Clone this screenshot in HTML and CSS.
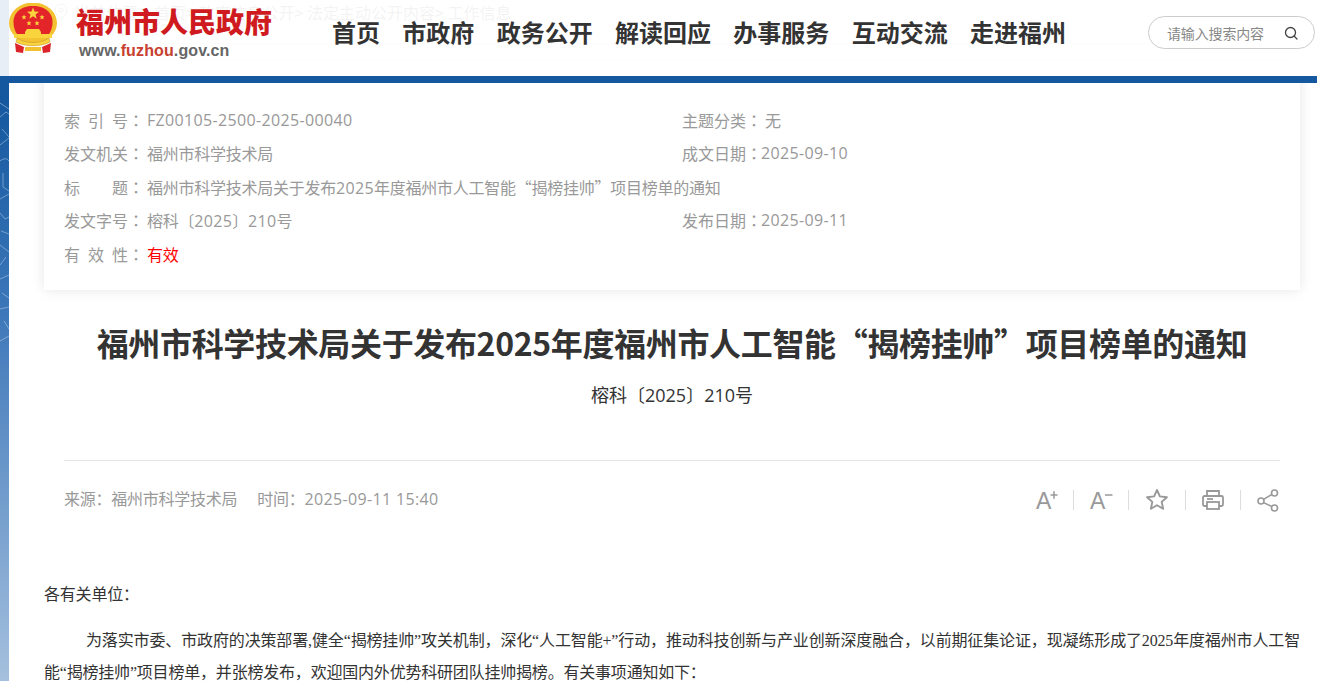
FILE: index.html
```html
<!DOCTYPE html>
<html lang="zh-CN">
<head>
<meta charset="utf-8">
<title>福州市科学技术局关于发布2025年度福州市人工智能“揭榜挂帅”项目榜单的通知</title>
<link rel="stylesheet" href="styles.css">
</head>
<body>
<div class="page">
  <svg class="texture" width="9" height="260" viewBox="0 0 9 260" aria-hidden="true">
    <g fill="none" stroke="#cfe2f5" stroke-width="1" stroke-opacity=".45">
      <path d="M0 8l9 6M0 22l6-5 3 2M2 34l7 8M0 50l9-7M0 66c4-3 7-3 9 0M3 78v14l6 4M0 104l9-5M0 118l5 6 4-2M1 136l8 3M0 150l9 7M6 162l-6 8M0 184l9-4M2 198l7 5M0 214l9-2M4 226l5 8M0 246l9-5"/>
    </g>
  </svg>
  <header class="site-header">
    <a class="logo">
      <svg class="emblem" width="48" height="51" viewBox="0 0 48 51" aria-hidden="true">
        <ellipse cx="24" cy="20" rx="24" ry="20.500" fill="#f2c230"/>
        <path d="M5 24 C2 10 12 3 24 3 C36 3 46 10 43 24 C42 28 41 30 39 32 H9 C7 30 6 28 5 24 Z" fill="#e3252a"/>
        <g fill="#f9d43c">
          <polygon points="24,4.500 25.500,8.600 30,8.700 26.500,11.400 27.700,15.700 24,13.300 20.300,15.700 21.500,11.400 18,8.700 22.500,8.600"/>
          <polygon points="15,11.500 15.700,13.300 17.600,13.400 16.100,14.600 16.600,16.500 15,15.400 13.400,16.500 13.900,14.600 12.400,13.400 14.300,13.300"/>
          <polygon points="20,17.500 20.700,19.300 22.600,19.400 21.100,20.600 21.600,22.500 20,21.400 18.400,22.500 18.900,20.600 17.400,19.400 19.300,19.300"/>
          <polygon points="28,17.500 28.700,19.300 30.600,19.400 29.100,20.600 29.600,22.500 28,21.400 26.400,22.500 26.900,20.600 25.400,19.400 27.300,19.300"/>
          <polygon points="33,11.500 33.700,13.300 35.600,13.400 34.100,14.600 34.600,16.500 33,15.400 31.400,16.500 31.900,14.600 30.400,13.400 32.300,13.300"/>
          <path d="M18 26h12l2 3v2H16v-2z"/>
          <rect x="5" y="31" width="38" height="4"/>
        </g>
        <path d="M8 35 C16 41 32 41 40 35 L41 39 C32 44 16 44 7 39 Z" fill="#f9d43c" stroke="#c9952a" stroke-width=".6"/>
        <path d="M6 40 L15 44 L14 50 L7 49 Z M42 40 L33 44 L34 50 L41 49 Z" fill="#dc242a"/>
        <path d="M16 44H32V48H16Z" fill="#f2c230"/>
      </svg>
      <span class="logo-words">
        <span class="logo-name">福州市人民政府</span>
        <span class="logo-url">www.<em>fuzhou</em>.gov.cn</span>
      </span>
    </a>
    <nav class="nav">
      <a>首页</a><a>市政府</a><a>政务公开</a><a>解读回应</a><a>办事服务</a><a>互动交流</a><a>走进福州</a>
    </nav>
    <div class="search">
      <span>请输入搜索内容</span>
      <svg width="14" height="14" viewBox="0 0 14 14" aria-hidden="true"><circle cx="6.500" cy="6.500" r="5" fill="none" stroke="#444" stroke-width="1.300"/><path d="M10 10l3 3" stroke="#444" stroke-width="1.300" stroke-linecap="round"/></svg>
    </div>
  </header>

  <main class="main">
    <div class="crumbs">
      <svg width="16" height="20" viewBox="0 0 16 20" aria-hidden="true"><path d="M8 2a6 6 0 0 1 6 6c0 4-6 10-6 10S2 12 2 8a6 6 0 0 1 6-6z" fill="none" stroke="#888"/><circle cx="8" cy="8" r="2" fill="none" stroke="#888"/></svg>
      <span>当前位置：首页&gt; 政府信息公开&gt; 法定主动公开内容&gt; 工作信息</span>
    </div>

    <section class="meta">
      <div class="meta-row"><span class="lbl">索引号</span><span class="colon">：</span><span class="num">FZ00105-2500-2025-00040</span></div>
      <div class="meta-row"><span class="lbl">主题分类</span><span class="colon">：</span><span>无</span></div>
      <div class="meta-row"><span class="lbl">发文机关</span><span class="colon">：</span><span>福州市科学技术局</span></div>
      <div class="meta-row"><span class="lbl">成文日期</span><span class="colon tight">：</span><span class="num">2025-09-10</span></div>
      <div class="meta-row wide"><span class="lbl">标题</span><span class="colon">：</span><span>福州市科学技术局关于发布<span class="num">2025</span>年度福州市人工智能“揭榜挂帅”项目榜单的通知</span></div>
      <div class="meta-row"><span class="lbl">发文字号</span><span class="colon">：</span><span>榕科〔<span class="num">2025</span>〕<span class="num">210</span>号</span></div>
      <div class="meta-row"><span class="lbl">发布日期</span><span class="colon tight">：</span><span class="num">2025-09-11</span></div>
      <div class="meta-row wide"><span class="lbl">有效性</span><span class="colon">：</span><span class="valid">有效</span></div>
    </section>

    <h1 class="title">福州市科学技术局关于发布2025年度福州市人工智能“揭榜挂帅”项目榜单的通知</h1>
    <p class="docno">榕科〔<span class="num">2025</span>〕<span class="num">210</span>号</p>

    <div class="info">
      <div class="source"><span>来源<span class="p">：</span>福州市科学技术局</span><span>时间<span class="p">：</span><span class="num">2025-09-11 15:40</span></span></div>
      <div class="tools">
        <svg width="24" height="24" viewBox="0 0 24 24" aria-hidden="true"><text x="2" y="21" class="tool-a">A</text><path d="M16.500 7h7M20 3.250v7.500" stroke="#999" stroke-width="1.500"/></svg>
        <i class="sep"></i>
        <svg width="24" height="24" viewBox="0 0 24 24" aria-hidden="true"><text x="1" y="21" class="tool-a">A</text><path d="M16 7h7.500" stroke="#999" stroke-width="1.500"/></svg>
        <i class="sep"></i>
        <svg width="26" height="24" viewBox="-1 0 26 24" aria-hidden="true"><path d="M12 2l2.900 6.400 7 .8-5.200 4.700 1.400 6.900L12 17.300l-6.100 3.500 1.400-6.900L2.100 9.200l7-.8z" fill="none" stroke="#999" stroke-width="1.900" stroke-linejoin="round"/></svg>
        <i class="sep"></i>
        <svg width="24" height="24" viewBox="0 0 24 24" aria-hidden="true"><g fill="none" stroke="#999" stroke-width="1.800"><path d="M6 8V3h12v5"/><path d="M6 18H3.500A1.500 1.500 0 0 1 2 16.500v-7A1.500 1.500 0 0 1 3.500 8h17A1.500 1.500 0 0 1 22 9.500v7a1.500 1.500 0 0 1-1.500 1.500H18"/><rect x="6" y="14" width="12" height="7"/><path d="M6 11h6"/></g></svg>
        <i class="sep"></i>
        <svg width="24" height="24" viewBox="0 0 24 24" aria-hidden="true"><g fill="none" stroke="#999" stroke-width="1.600"><circle cx="5" cy="13" r="3"/><circle cx="18.500" cy="5" r="3"/><circle cx="18.500" cy="20" r="3"/><path d="M7.600 11.400l8.300-4.900M7.600 14.600l8.300 4"/></g></svg>
      </div>
    </div>

    <article class="content">
      <p class="salute">各有关单位<span class="p">：</span></p>
      <p class="para">为落实市委、市政府的决策部署,健全“揭榜挂帅”攻关机制<span class="p">，</span>深化“人工智能+”行动<span class="p">，</span>推动科技创新与产业创新深度融合<span class="p">，</span>以前期征集论证<span class="p">，</span>现凝练形成了2025年度福州市人工智能“揭榜挂帅”项目榜单<span class="p">，</span>并张榜发布<span class="p">，</span>欢迎国内外优势科研团队挂帅揭榜。有关事项通知如下<span class="p">：</span></p>
    </article>
  </main>
</div>
</body>
</html>
```
FILE: styles.css
```css
* { box-sizing: border-box; }
html, body { margin: 0; height: 100%; overflow: hidden; }
body { font-family: "Noto Sans CJK SC", "Liberation Sans", sans-serif; font-size: 16px; color: #333; }
.page {
  position: relative;
  height: 681px;
  padding-left: 9px;
  overflow: hidden;
  background: linear-gradient(#15589f 0, #15589f 100px, #3a75b8 300px, #a5c0de 681px);
}
.texture { position: absolute; left: 0; top: 95px; }
.site-header {
  position: absolute;
  top: 0; left: 0; right: 0;
  z-index: 2;
  height: 83px;
  display: flex;
  align-items: flex-start;
  background: rgba(255, 255, 255, .9);
  border-bottom: 7px solid #15589f;
}
.logo { display: flex; margin-left: 9px; padding-top: 3px; width: 323px; flex: none; }
.emblem { flex: none; }
.logo-words { display: flex; flex-direction: column; margin-left: 19px; }
.logo-name { font-size: 28px; font-weight: 900; line-height: 38px; color: #cf1b1f; white-space: nowrap; margin-top: -1px; }
.logo-url { font-family: "Liberation Sans", sans-serif; font-size: 16px; font-weight: 700; line-height: 20px; color: #666; margin: 1px 0 0 3px; letter-spacing: .12px; white-space: nowrap; }
.logo-url em { font-style: normal; color: #c8402f; }
.nav { display: flex; gap: 22.330px; padding-top: 14px; flex: none; }
.nav a { font-size: 24px; font-weight: 700; line-height: 36px; color: #333; white-space: nowrap; }
.search {
  margin: 16px 2px 0 auto;
  width: 167px;
  height: 33px;
  flex: none;
  border: 1px solid #ccc;
  border-radius: 17px;
  display: flex;
  align-items: center;
  justify-content: space-between;
  padding: 0 16px 0 18px;
  font-size: 14px;
  letter-spacing: -.15px;
  color: #888;
  background: #fff;
}
.main { position: relative; height: 100%; background: #fff; }
.crumbs {
  display: flex;
  align-items: center;
  gap: 5px;
  height: 44px;
  padding: 0 0 20px 44px;
  color: #888;
  border-bottom: 1px solid #ddd;
  margin: 0 148px 0 0;
  white-space: nowrap;
}
.meta {
  margin: 18px 17px 0 35px;
  padding: 0 20px 19.500px;
  height: 228px;
  display: grid;
  grid-template-columns: 618px 1fr;
  grid-auto-rows: 33.500px;
  align-content: end;
  color: #999;
  letter-spacing: -.25px;
  background: #fff;
  box-shadow: 0 0 12px rgba(0, 0, 0, .1);
}
.meta-row { display: flex; align-items: center; white-space: nowrap; }
.meta-row.wide { grid-column: 1 / -1; }
.lbl { width: 64px; letter-spacing: 0; text-align: justify; text-align-last: justify; }
.colon { width: 19px; flex: none; letter-spacing: 0; font-family: "Noto Sans CJK TC", sans-serif; }
.colon.tight { width: 15px; }
.p { font-family: "Noto Sans CJK TC", sans-serif; line-height: 0; }
.num { font-family: "Open Sans", sans-serif; letter-spacing: .35px; }
.valid { color: #f00; }
.title {
  margin: 28px 17px 0 35px;
  font-size: 32px;
  line-height: 48px;
  font-weight: 700;
  letter-spacing: -.34px;
  text-align: center;
  color: #333;
  white-space: nowrap;
}
.docno { margin: 14px 17px 0 35px; font-size: 18px; line-height: 28px; text-align: center; color: #333; }
.docno .num { letter-spacing: 0; }
.info {
  margin: 51px 37px 0 55px;
  padding-top: 25px;
  border-top: 1px solid #e5e5e5;
  display: flex;
  justify-content: space-between;
  align-items: center;
  color: #999;
  letter-spacing: -.25px;
}
.source { display: flex; gap: 20px; }
.tools { display: flex; align-items: center; gap: 15px; position: relative; top: 2px; }
.tools svg { display: block; overflow: visible; }
.tool-a { font-family: "Liberation Sans", sans-serif; font-size: 23px; fill: #999; }
.sep { display: block; width: 1px; height: 20px; background: #ddd; }
.content { margin: 0 17px 0 35px; font-family: "Liberation Serif", "Noto Sans CJK SC", serif; color: #333; letter-spacing: -.2px; }
.content p { margin: 0; line-height: 32px; text-align: justify; }
.salute { padding-top: 69px; }
.para { margin-top: 14px !important; text-indent: 42px; }
```
